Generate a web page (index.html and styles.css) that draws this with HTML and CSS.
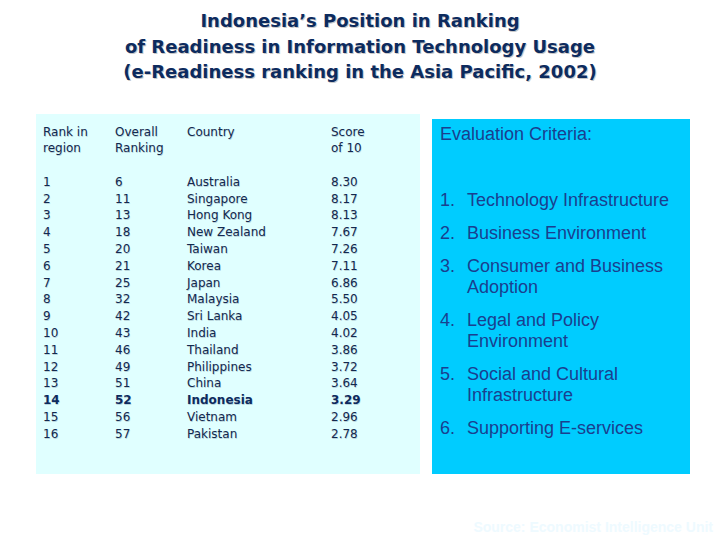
FILE: index.html
```html
<!DOCTYPE html>
<html>
<head>
<meta charset="utf-8">
<link rel="stylesheet" href="styles.css">
</head>
<body>
<div class="slide">
  <h1 class="title">Indonesia’s Position in Ranking<br>of Readiness in Information Technology Usage<br>(e-Readiness ranking in the Asia Pacific, 2002)</h1>
  <div class="content">
    <div class="table-panel">
      <div class="grid head">
        <div>Rank in<br>region</div>
        <div>Overall<br>Ranking</div>
        <div>Country</div>
        <div>Score<br>of 10</div>
      </div>
      <div class="grid body">
        <div>1<br>2<br>3<br>4<br>5<br>6<br>7<br>8<br>9<br>10<br>11<br>12<br>13<br><b>14</b><br>15<br>16</div>
        <div>6<br>11<br>13<br>18<br>20<br>21<br>25<br>32<br>42<br>43<br>46<br>49<br>51<br><b>52</b><br>56<br>57</div>
        <div>Australia<br>Singapore<br>Hong Kong<br>New Zealand<br>Taiwan<br>Korea<br>Japan<br>Malaysia<br>Sri Lanka<br>India<br>Thailand<br>Philippines<br>China<br><b>Indonesia</b><br>Vietnam<br>Pakistan</div>
        <div>8.30<br>8.17<br>8.13<br>7.67<br>7.26<br>7.11<br>6.86<br>5.50<br>4.05<br>4.02<br>3.86<br>3.72<br>3.64<br><b>3.29</b><br>2.96<br>2.78</div>
      </div>
    </div>
    <div class="criteria-panel">
      <p class="criteria-title">Evaluation Criteria:</p>
      <ol class="criteria">
        <li><span class="num">1.</span><span>Technology Infrastructure</span></li>
        <li><span class="num">2.</span><span>Business Environment</span></li>
        <li><span class="num">3.</span><span>Consumer and Business Adoption</span></li>
        <li><span class="num">4.</span><span>Legal and Policy Environment</span></li>
        <li><span class="num">5.</span><span>Social and Cultural Infrastructure</span></li>
        <li><span class="num">6.</span><span>Supporting E-services</span></li>
      </ol>
    </div>
  </div>
  <div class="source">Source: Economist Intelligence Unit</div>
</div>
</body>
</html>
```
FILE: styles.css
```css
html, body {
  margin: 0;
  padding: 0;
  background: #ffffff;
}
.slide {
  width: 720px;
  height: 540px;
  display: flex;
  flex-direction: column;
}
.title {
  margin: 8px 0 0 0;
  font-family: "DejaVu Sans", Verdana, sans-serif;
  font-weight: bold;
  font-size: 18px;
  line-height: 25.5px;
  text-align: center;
  color: #0d2b5e;
  text-shadow: 1px 1px 0 #c8c8c8;
}
.content {
  display: flex;
  align-items: flex-end;
  gap: 12px;
  margin: 29px 0 0 36px;
}
.table-panel {
  width: 377px;
  height: 350px;
  padding: 10px 0 0 7px;
  background: #e0ffff;
  font-family: "DejaVu Sans", Verdana, sans-serif;
  font-size: 12px;
  line-height: 16.8px;
  color: #13294f;
  text-shadow: 0.5px 0.5px 0 #b9d6dc;
}
.grid {
  display: grid;
  grid-template-columns: 72px 72px 144px 1fr;
}
.grid.body {
  margin-top: 16.8px;
}
.grid b {
  font-weight: bold;
  color: #0d2b5e;
}
.criteria-panel {
  width: 250px;
  height: 355px;
  padding: 0 0 0 8px;
  background: #00ccff;
  font-family: "Liberation Sans", Arial, sans-serif;
  font-size: 18px;
  line-height: 21px;
  color: #1a3f8f;
}
.criteria-title {
  margin: 5px 0 0 0;
}
.criteria {
  list-style: none;
  margin: 45px 0 0 0;
  padding: 0;
  display: flex;
  flex-direction: column;
  gap: 12px;
}
.criteria li {
  display: flex;
}
.criteria .num {
  width: 27px;
  flex: none;
}
.source {
  align-self: flex-end;
  margin: 45px 7px 0 0;
  font-family: "Liberation Sans", Arial, sans-serif;
  font-weight: bold;
  font-size: 14px;
  color: #eefaff;
}
```
